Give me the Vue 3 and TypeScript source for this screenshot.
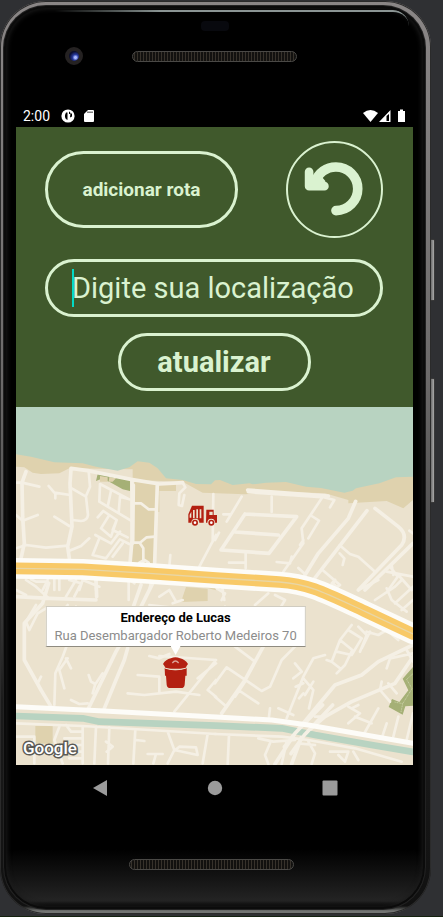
<script setup lang="ts">
import { ref } from 'vue'

interface Roads {
  offset: string
  wide: string
  thin: string
}

const address = ref('')
const owner = 'Endereço de Lucas'
const street = 'Rua Desembargador Roberto Medeiros 70'

const roads: Roads[] = [
  {
    offset: 'translate(0 -21)',
    wide:
      'M30 215L18 248L20 350L25 430L15 475M165 208L162 250L168 380L155 440L160 475M165 205L215 212L345 238L430 252L500 248M348 240L348 420L342 490M424 252L416 490M352 255L350 430',
    thin:
      'M0 248H18L70 260M0 345L20 362L65 345M0 445L30 435L90 443L155 437M98 258L115 278L163 285M118 280V295M115 350L160 378M162 262L210 290L216 345Q214 362 195 363L170 360M218 212L222 260L210 288M160 452L195 438L220 415M250 305L252 252L340 298L312 290M285 272L275 320M312 290L308 338M250 305L345 362M245 352L262 333L302 360L290 390L335 412M280 345L255 385L285 410L302 360M238 405L285 430L312 395M250 415L230 465L270 475L312 418L340 432M320 430L290 470M348 428H372L392 412L416 410M372 430L382 445V490M370 488L385 480L398 488M352 310H375L398 328H416M500 248L508 262L490 280L488 315L498 318L505 285M592 282L590 425M600 405L550 500M463 465L460 500M95 540L80 570M45 538L60 545H95M115 538V570M130 538V570M190 570L200 540L250 560M240 538V570M355 550L340 538M400 570L405 545',
  },
  {
    offset: 'translate(597 -21)',
    wide:
      'M100 275L320 290M90 342L245 350L162 460L18 450L90 342M60 396L190 405M422 304L400 355L310 460L270 525M456 332L295 540M480 325L550 380Q580 405 560 435L430 570M594 430L450 570M98 270L340 288',
    thin:
      'M80 290L35 365M25 343H45M170 290V336M92 460V505M42 488H92M320 295L260 385L265 430L205 515M185 486L225 490L230 470M290 348L312 362L280 415M255 435L265 420M320 290L358 300L345 322M374 436L405 462L430 470L480 515M374 460L388 475L383 495M250 504L270 522M320 508L375 555L350 570M350 550L360 540M525 500L548 530L520 570M515 515L594 530M594 400L583 392M550 525L590 570M530 495L535 525M12 398L0 420',
  },
  {
    offset: 'translate(0 519)',
    wide:
      'M0 50L100 55L240 60M240 0L242 50M98 10L80 70L25 130V240L75 330L105 380M410 10L365 100L300 215L215 390M375 15L345 100M335 205L325 240L300 300L265 385',
    thin:
      'M30 0L60 20L98 55M0 30L30 45M160 0L195 10L175 50M180 0L150 50M338 0V60M60 75L30 125L40 150L65 100L90 85M155 75L130 105V140M180 80L155 190L140 230L118 280L115 375M150 235L165 265M155 235L130 270L145 325M218 285L225 305L238 312L230 340M260 280L240 310M165 360L190 372L215 370M400 228L430 235L460 222M430 228L600 240M365 285L430 290V340M335 340L385 345L480 335L550 345M545 295L600 250M600 240L475 395M600 300L575 330L600 350M75 290L65 310M430 50L460 30L480 65M400 75L460 82M470 70L500 60M0 430L200 438L600 462M200 440V550M240 440L235 550M280 442L276 550M358 448L352 550M130 440L115 480L140 550M150 435L165 455H195M145 475H195M150 495H195M155 515H195M160 535H195M360 480L385 483M395 522H440M420 522L412 550M455 455L475 510L455 550M475 510L545 525L540 502L490 500L475 512M575 462L560 550M0 470H55V550M270 485L290 500L272 515',
  },
  {
    offset: 'translate(597 519)',
    wide:
      'M594 195L490 245L440 285L360 315L310 375L240 460L180 552M594 230L540 310L410 365L330 410L260 470L230 552M150 190L90 300L20 400',
    thin:
      'M240 200L200 240L165 320L140 333L35 262L0 310M90 305L60 350M70 330L130 370M0 350L35 380M30 80L0 130M20 10L28 60M60 200L120 245M160 40L120 75M180 45L210 60L195 85M330 225L295 235L265 290L215 415M240 250L260 275L235 295M265 295L295 330L282 385M265 310L242 320M265 340L252 355M295 305L270 345M330 410L300 410M410 135L375 180L350 245L335 240M400 150L440 175L410 225L365 215M375 180L412 210L390 255L365 280M350 245L375 265M430 140L455 165L435 215M455 155L490 165L515 150L550 180M440 205L465 155M360 0L350 20L410 60M360 15L390 50M430 30L490 0M515 25L530 60L575 95M480 60L540 20L560 0M540 70L594 20M560 90L594 60M515 265L525 235L594 220M575 210L594 245M500 305L495 330L525 365M520 310L545 340M400 380L435 400L400 430M410 385L430 375M490 385L445 465M515 430L500 475M550 410L535 470M594 400L575 480M420 410L470 430M190 385L235 405M165 385L162 410M0 462L200 470L280 480L420 505L560 545M42 465L38 552M130 475L175 485L240 480M165 490L150 525L160 552M280 485L300 520L290 552M345 515H400L390 545L370 525M415 515L430 540M215 485L200 552M250 490L300 495M5 25L30 40L20 60',
  },
]
</script>

<template>
  <main class="stage">
    <div class="phone">
      <i class="side-key power"></i>
      <i class="side-key volume"></i>
      <div class="face">
        <div class="sensor"></div>
        <div class="hardware">
          <i class="camera"></i>
          <i class="speaker"></i>
          <i></i>
        </div>

        <div class="screen">
          <header class="status">
            <time>2:00</time>
            <svg width="14" height="14" viewBox="0 0 14 14" aria-hidden="true">
              <circle cx="7" cy="7" r="6.6" fill="#fff" />
              <path d="M5 3.500h1.500V11Q3.500 10 4 6zM8 2.800h1v2.200H8zM9.500 3.500l1.500 1.500v2.500l-2 1z" fill="#000" />
            </svg>
            <svg class="card" width="11" height="14" viewBox="0 0 11 14" aria-hidden="true">
              <path d="M4 1h5q1 0 1 1v10q0 1-1 1H1q-1 0-1-1V5z" fill="#fff" />
              <path d="M4 2.500v1.500M6 2.500v1.500M8 2.500v1.500" stroke="#000" />
            </svg>
            <svg class="signals" width="43" height="14" viewBox="0 0 43 14" aria-hidden="true">
              <path d="M0 4Q7.500-2 15 4L7.500 13z" fill="#fff" />
              <path d="M27.500 1v12H16zM26 5v7h-2.500V7z" fill="#fff" fill-rule="evenodd" />
              <path d="M35 2h2V.5h3V2h2v11h-7z" fill="#fff" />
            </svg>
          </header>

          <form class="panel" @submit.prevent>
            <div class="actions">
              <button type="button" class="pill route">adicionar rota</button>
              <button type="button" class="undo" aria-label="Voltar">
                <svg viewBox="0 0 97 97" fill="none" stroke="#daf2d0" stroke-linecap="round" stroke-linejoin="round" aria-hidden="true">
                  <path d="M27 42C32 31 39 25 50 25A22.500 22.500 0 0 1 50 70.500" stroke-width="10" />
                  <path d="M22 30V45H38" stroke-width="9" />
                  <path d="M23 44L32 33L38 40L35 45z" fill="#daf2d0" stroke-width="2" />
                </svg>
              </button>
            </div>
            <label class="pill field">
              <i class="caret"></i>
              <input v-model="address" type="text" placeholder="Digite sua localização" aria-label="Digite sua localização" />
            </label>
            <button type="submit" class="pill update">atualizar</button>
          </form>

          <section class="map">
            <svg class="tiles" viewBox="0 0 1191 1074" aria-hidden="true">
              <rect width="1191" height="1074" fill="#ebe2ce" />
              <path
                d="M0 135H1191V279L1162 304L1112 282L997 289V279L927 259L797 254L687 262L560 257L500 224L350 219V187L160 184L130 199L75 201L50 197L25 181L0 179z"
                fill="#dfd2ae"
              />
              <path
                d="M0 0H1191V209L1140 211L1090 229L1020 244L1010 251L985 257L915 243L870 239L810 225L750 227L710 232L700 229L650 234L612 219L597 220L585 232L540 231L500 219L450 214L425 184L400 167L365 163L340 181L305 191L240 179L200 169L115 166L45 149L0 142z"
                fill="#b8d3c1"
              />
              <path d="M355 222L424 232L416 470H345zM430 252H480V232H424V315H430zM58 957H110V1010H58zM510 540L575 545V582L495 585zM540 534L600 550V540z" fill="#dfd2ae" />
              <path d="M245 201L342 220V252L320 247L280 224L255 216L240 222z" fill="#a5b076" />
              <path d="M252 207L275 211V224H252zM280 210L300 214L290 224H278z" fill="#dfd2ae" />
              <path d="M1191 780L1160 815L1177 850L1150 885L1128 876L1118 900L1160 923L1168 898L1191 896z" fill="#a5b076" />
              <path d="M1191 800L1172 817L1188 845L1160 890L1135 885M1155 915L1160 890" class="trail" />

              <g v-for="area in roads" :key="area.offset" :transform="area.offset" class="road">
                <path :d="area.wide" class="wide" />
                <path :d="area.thin" class="thin" />
              </g>

              <g class="road">
                <path d="M0 927L200 934L250 944L600 956L797 964L897 984L1067 1014L1191 1035" stroke="#b8d3c1" stroke-width="20" />
                <path d="M920 894L837 979L805 1020M950 894L865 984L825 1040" class="wide" />
                <path d="M0 899L250 911L600 930L767 939L877 954L1191 1009" class="avenue" />
                <path d="M0 484L200 487L400 499L600 513L790 525C880 531 930 559 1047 613L1191 681" class="shoulder" />
                <path d="M0 484L200 487L400 499L600 513L790 525C880 531 930 559 1047 613L1191 681" class="highway" />
                <path d="M0 484L200 487L400 499L600 513L790 525C880 531 930 559 1047 613L1191 681" class="median" />
              </g>

              <g fill="#b32011">
                <path d="M528 296H563V347H550A11 11 0 0 0 526 347H517V322z" />
                <path d="M571 308H593V324H603V347H597A11 11 0 0 0 574 347H570z" />
                <circle cx="537" cy="347" r="9" />
                <circle cx="586" cy="347" r="9" />
                <path d="M531 309H536V334H531zM541 307H546V334H541zM551 307H556V334H551zM521 323L526 314V332H521zM580 314H590V324H580z" fill="#ebe2ce" />
                <circle cx="537" cy="347" r="4" fill="#fff" />
                <circle cx="586" cy="347" r="4" fill="#fff" />
                <path d="M441 771Q449 757 465 754Q478 747 492 754Q507 757 516 771Q508 781 511 785H447Q449 780 441 771z" />
                <path d="M446 783Q478 795 512 783V806H508L506 833Q505 843 495 843H463Q453 843 452 833L450 806H447z" />
                <path d="M446 783Q478 794 511 783" fill="none" stroke="#ebe2ce" stroke-width="3" />
                <path d="M469 768Q478 756 488 768" fill="none" stroke="#dba397" stroke-width="4" />
              </g>
            </svg>
            <div class="info">
              <strong>{{ owner }}</strong>
              <span>{{ street }}</span>
            </div>
            <span class="brand">Google</span>
          </section>

          <nav class="nav">
            <button type="button" aria-label="Voltar">
              <svg viewBox="0 0 16 16"><path d="M1 8L15 0V16z" fill="#9b9b9b" /></svg>
            </button>
            <button type="button" aria-label="Início">
              <svg viewBox="0 0 16 16"><circle cx="8" cy="8" r="7.200" fill="#9b9b9b" /></svg>
            </button>
            <button type="button" aria-label="Recentes">
              <svg viewBox="0 0 16 16"><rect x=".5" y=".5" width="15" height="15" rx="1" fill="#9b9b9b" /></svg>
            </button>
          </nav>
        </div>

        <div class="chin"><i class="speaker"></i></div>
      </div>
    </div>
  </main>
</template>

<style>
body {
  margin: 0;
  background: #2f3033;
}
</style>

<style scoped>
* {
  box-sizing: border-box;
}

.stage {
  padding: 1px 12px 2px 0;
  background: #2f3033;
  border-bottom: 2px solid #14220f;
  font-family: Roboto, 'Liberation Sans', sans-serif;
}

.phone {
  position: relative;
  padding: 5px 6px 5px 4px;
  border-radius: 46px;
  background: linear-gradient(#8a8686 0, #858282 70px, #6c6a6a 380px, #4a4a4a 560px, #1b1b1b 700px, #111 calc(100% - 8px), #737573 calc(100% - 3px));
  box-shadow: inset 0 0 0 1px #2b2b2b;
}

.side-key {
  position: absolute;
  left: 100%;
  width: 4px;
  border: 1px solid #3a3a3a;
  border-left: 0;
  border-radius: 0 2px 2px 0;
  background: linear-gradient(90deg, #6c6c6c, #aaa);
}

.power {
  top: 238px;
  height: 62px;
}

.volume {
  top: 377px;
  height: 125px;
}

.face {
  position: relative;
  display: flex;
  flex-direction: column;
  padding: 15px 12px 0;
  border-radius: 42px;
  background: linear-gradient(transparent calc(100% - 60px), #242424 calc(100% - 8px), #050505 calc(100% - 3px)), #000;
  box-shadow:
    0 0 0 1px #222,
    inset 0 0 0 2px #0b0b0b,
    inset 0 0 5px 3px #1b1b1b;
}

.face::before {
  position: absolute;
  top: 4px;
  right: 16px;
  left: 50px;
  height: 14px;
  border-top: 2px solid #8b9594;
  border-radius: 0 26px 0 0;
  mask-image: linear-gradient(90deg, transparent, #000 30%);
  content: '';
}

.sensor {
  align-self: center;
  width: 28px;
  height: 10px;
  border-radius: 4px;
  background: #08090e;
}

.hardware {
  display: grid;
  grid-template-columns: 1fr auto 1fr;
  align-items: center;
  margin: 16px 0 40px;
}

.camera {
  justify-self: center;
  width: 18px;
  height: 18px;
  border: 4px solid #252222;
  border-radius: 50%;
  background: radial-gradient(circle at 65% 65%, #a8b8ff 0 1px, #27399a 3px, #0b0e2c 6px);
}

.speaker {
  width: 165px;
  height: 11px;
  border: 1px solid #4a4946;
  border-radius: 6px;
  background: repeating-linear-gradient(90deg, #12110f 0 1px, #37322b 1px 2px, #12110f 2px 3px);
}

.status {
  display: flex;
  align-items: center;
  height: 22px;
  padding: 0 7px;
  color: #fff;
  font-size: 14px;
}

.status time {
  width: 38px;
}

.card {
  margin-left: 9px;
}

.signals {
  margin-left: auto;
}

.panel {
  display: flex;
  flex-direction: column;
  padding: 14px 30px 16px 29px;
  background: #40592c;
}

.actions {
  display: flex;
  align-items: center;
  justify-content: space-between;
  margin-bottom: 21px;
}

.pill,
.undo {
  border: 3px solid #daf2d0;
  background: transparent;
  color: #daf2d0;
  font-family: inherit;
}

.pill {
  height: 58px;
  border-radius: 39px;
}

.route {
  width: 193px;
  height: 77px;
  font-size: 19px;
  font-weight: 700;
}

.undo {
  width: 97px;
  height: 97px;
  padding: 0;
  border-width: 2px;
  border-radius: 50%;
}

.undo svg {
  display: block;
  width: 100%;
}

.field {
  display: flex;
  align-items: center;
  padding: 0 24px;
}

.caret {
  width: 2px;
  height: 38px;
  margin-right: -2px;
  background: #03dac5;
}

.field input {
  flex: 1;
  min-width: 0;
  padding: 0;
  border: 0;
  outline: 0;
  background: transparent;
  color: #daf2d0;
  font-family: inherit;
  font-size: 29px;
}

.field input::placeholder {
  color: #daf2d0;
  opacity: 1;
}

.update {
  align-self: center;
  width: 193px;
  margin-top: 16px;
  font-size: 29px;
  font-weight: 700;
}

.map {
  position: relative;
  overflow: hidden;
}

.tiles {
  display: block;
  width: 100%;
}

.road {
  fill: none;
  stroke: #f5f0e5;
  stroke-linecap: round;
  stroke-linejoin: round;
}

.wide {
  stroke-width: 11;
}

.thin {
  stroke-width: 8;
}

.avenue {
  stroke: #fdfcf8;
  stroke-width: 15;
}

.shoulder {
  stroke: #fdfcf8;
  stroke-width: 62;
}

.highway {
  stroke: #f8c967;
  stroke-width: 35;
}

.median {
  stroke: #e8d6a6;
  stroke-width: 4;
}

.trail {
  fill: none;
  stroke: #dbe0bd;
  stroke-width: 2;
  stroke-dasharray: 3 2;
}

.info {
  position: absolute;
  bottom: 33%;
  left: 40.2%;
  display: flex;
  flex-direction: column;
  gap: 2px;
  padding: 3px 8px 2px;
  border: 1px solid #d0ccc0;
  border-bottom-color: #8f8b80;
  background: #fff;
  color: #8c8c8c;
  font-size: 13px;
  line-height: 16px;
  text-align: center;
  white-space: nowrap;
  transform: translateX(-50%);
}

.info::after {
  position: absolute;
  top: 100%;
  left: 50%;
  width: 10px;
  height: 9px;
  margin-left: -5px;
  background: #fff;
  clip-path: polygon(0 0, 100% 0, 50% 100%);
  content: '';
}

.info strong {
  color: #000;
}

.brand {
  position: absolute;
  bottom: 7px;
  left: 7px;
  color: #fff;
  font-size: 17px;
  font-weight: 500;
  line-height: 20px;
  -webkit-text-stroke: 3px #5b5a55;
  paint-order: stroke fill;
}

.nav {
  display: flex;
  align-items: center;
  justify-content: center;
  gap: 99px;
  height: 46px;
  background: #000;
}

.nav button {
  width: 16px;
  height: 16px;
  padding: 0;
  border: 0;
  background: none;
}

.nav svg {
  display: block;
}

.chin {
  display: flex;
  justify-content: center;
  padding: 48px 6px 39px 0;
}
</style>
